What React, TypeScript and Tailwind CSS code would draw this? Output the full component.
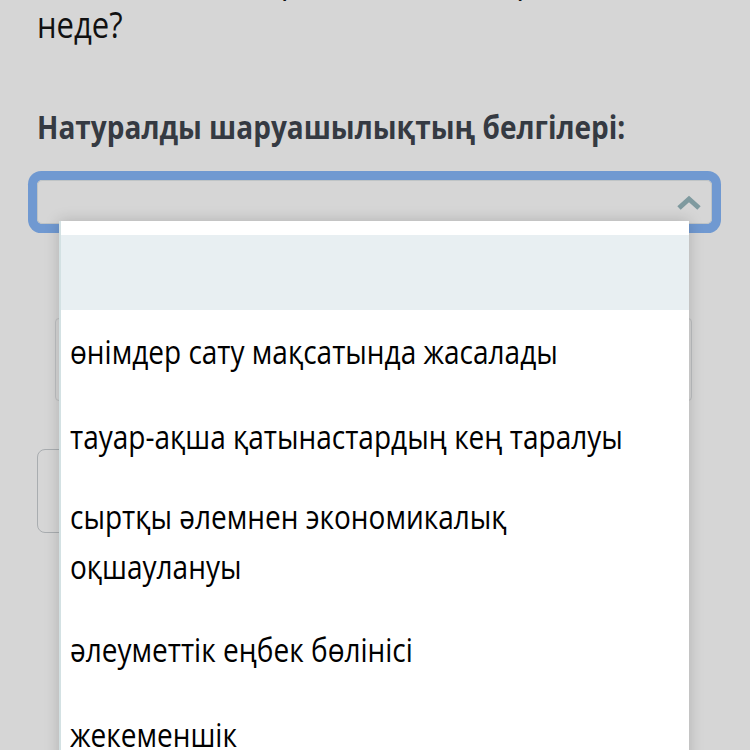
const options = [
  "өнімдер сату мақсатында жасалады",
  "тауар-ақша қатынастардың кең таралуы",
  "сыртқы әлемнен экономикалық оқшаулануы",
  "әлеуметтік еңбек бөлінісі",
  "жекеменшік",
];

// the screenshot is stretched a little vertically, so text is drawn taller
const tall = "inline-block origin-[50%_65%] scale-y-[1.17]";

const App = () => {
  return (
    <div
      className="relative h-[750px] w-[750px] overflow-hidden bg-[#d6d6d6] text-black"
      style={{ fontFamily: '"Open Sans", "Noto Sans", sans-serif' }}
    >
      <div className="pl-[37px] pr-[30px]">
        <p className="-mt-[44px] text-[31px] leading-[46px] text-[#111]">
          <span className={tall}>Қала мен дала арасындағы айырмашылық</span>
          <br />
          <span className={tall}>неде?</span>
        </p>

        <h2 className="mt-[61px] text-[28px] font-bold leading-[36px] text-[#353a42]">
          <span className={tall}>Натуралды шаруашылықтың белгілері:</span>
        </h2>

        <div className="relative mt-[35px] w-[675px]">
          <div className="flex h-[44px] items-center justify-end rounded-[5px] border border-[#bfc4c6] pr-[9px] ring-[9px] ring-[#7099d1]">
            <svg width="26" height="16" viewBox="0 0 26 16" className="mt-[1px]">
              <polyline
                points="3,13 13,4 23,13"
                fill="none"
                stroke="#7f9a9f"
                strokeWidth="5"
                strokeLinejoin="miter"
              />
            </svg>
          </div>

          {/* fields behind the open list */}
          <div className="mt-[94px] ml-[18px] h-[83px] w-[637px] rounded-[4px] border border-[#bdbfc1]" />
          <div className="mt-[48px] h-[84px] w-[200px] rounded-[8px] border border-[#a9adb0]" />

          <div className="absolute left-[22px] top-[41px] z-10 w-[630px] border-l-2 border-[#d3e1e3] bg-white pt-[14px] shadow-[0_0_14px_rgba(0,0,0,0.18)]">
            <div className="h-[75px] bg-[#e8eff2]" />
            {options.map((opt) => (
              <div
                key={opt}
                className="py-[21px] pl-[9px] pr-[40px] text-[28px] leading-[43px]"
              >
                <span className={tall}>{opt}</span>
              </div>
            ))}
          </div>
        </div>
      </div>
    </div>
  );
};

export default App;
